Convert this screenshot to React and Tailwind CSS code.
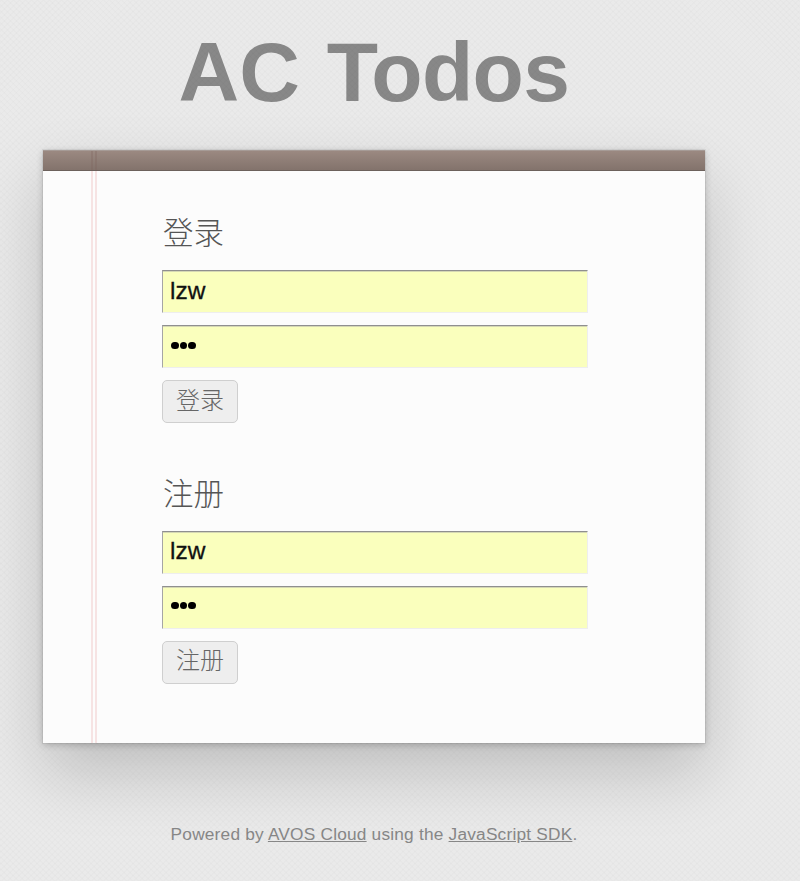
function Field({ value, password, raised }) {
  return (
    <div className="mb-3 flex h-[43px] w-[426px] items-center border border-l-[#a5a5a5] border-t-[#8f8f8f] border-r-[#eeeeee] border-b-[#eeeeee] bg-[#faffbd] pl-[7px] shadow-[inset_0_1px_0_#d5d8b4]">
      {password ? (
        <span className={raised ? "ml-px flex gap-px pb-[4px]" : "ml-px flex gap-px pb-[2px]"}>
          <i className="h-[7.5px] w-[7.5px] rounded-full bg-black" />
          <i className="h-[7.5px] w-[7.5px] rounded-full bg-black" />
          <i className="h-[7.5px] w-[7.5px] rounded-full bg-black" />
        </span>
      ) : (
        <span
          className={
            raised
              ? "pb-[4px] text-[24.5px] leading-[36px] text-[#111] [-webkit-text-stroke:0.3px_#111]"
              : "pb-[2px] text-[24.5px] leading-[39px] text-[#111] [-webkit-text-stroke:0.3px_#111]"
          }
        >
          {value}
        </span>
      )}
    </div>
  );
}

function Form({ title, raised }) {
  return (
    <section className="h-[261px]">
      <h2 className="mb-[17px] h-[43px] pl-px font-['Noto_Sans_CJK_SC',sans-serif] text-[30.5px] leading-[42px] font-light text-[#555]">
        {title}
      </h2>
      <Field value="lzw" raised={raised} />
      <Field password raised={raised} />
      <button
        className={
          raised
            ? "block h-[43px] w-[76px] rounded-[5px] border border-[#cfcfcf] bg-[#eeeeee] pb-[7px] font-['Noto_Sans_CJK_SC',sans-serif] text-[24px] leading-[34px] font-light text-[#666]"
            : "block h-[43px] w-[76px] rounded-[5px] border border-[#cfcfcf] bg-[#eeeeee] pb-[5px] font-['Noto_Sans_CJK_SC',sans-serif] text-[24px] leading-[36px] font-light text-[#666]"
        }
      >
        {title}
      </button>
    </section>
  );
}

export default function App() {
  return (
    <div className="relative h-[881px] w-[800px] overflow-hidden bg-[#eaeaea] font-['Liberation_Sans',Arial,sans-serif]">
      <div className="relative ml-[43px] w-[662px]">
        <h1 className="h-[150px] pt-[25px] text-center text-[84px] leading-[95px] font-bold whitespace-nowrap text-[#888888] [word-spacing:3.5px]">
          AC <span className="tracking-[-0.6px]">Todos</span>
        </h1>
        <main className="relative h-[593px] bg-[#fcfcfc] shadow-[0_0_0_1px_rgba(0,0,0,0.05),0_2px_7px_rgba(0,0,0,0.2),0_30px_60px_rgba(0,0,0,0.18)]">
          <div className="h-[21px] border-t border-b border-t-[#a69b96] border-b-[#6c615c] bg-linear-to-b from-[#9b8981] to-[#83736c]" />
          <div className="absolute top-[21px] bottom-0 left-[48px] w-[6px] border-x-2 border-[#f6e3e3]" />
          <div className="absolute top-px left-[48px] h-[19px] w-[6px] border-x-2 border-[#7d625c]/30" />
          <div className="pt-[39px] pl-[119px]">
            <Form title="登录" />
            <Form title="注册" raised />
          </div>
        </main>
        <footer className="pt-[81px] text-center text-[17.3px] leading-[21px] tracking-[0.2px] whitespace-nowrap text-[#888888]">
          Powered by <a className="underline">AVOS Cloud</a> using the{" "}
          <a className="underline">JavaScript SDK</a>.
        </footer>
      </div>
      <div className="pointer-events-none absolute inset-0 bg-[repeating-linear-gradient(45deg,rgba(0,0,0,0.012)_0_1.4px,transparent_1.4px_4.24px),repeating-linear-gradient(-45deg,rgba(0,0,0,0.012)_0_1.4px,transparent_1.4px_4.24px)] [clip-path:polygon(evenodd,0_0,800px_0,800px_881px,0_881px,0_0,43px_150px,705px_150px,705px_743px,43px_743px,43px_150px)]" />
    </div>
  );
}
